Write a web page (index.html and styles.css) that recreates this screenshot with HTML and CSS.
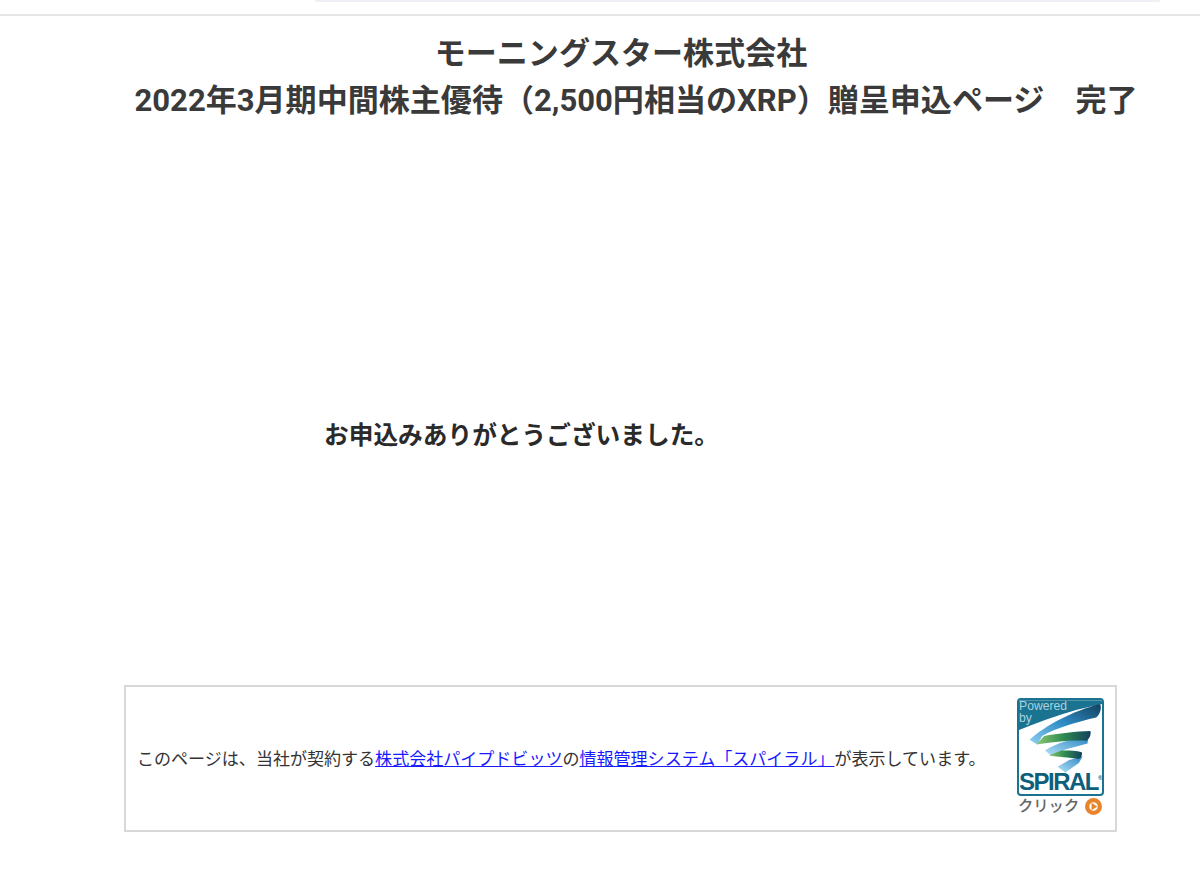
FILE: index.html
```html
<!DOCTYPE html>
<html lang="ja">
<head>
  <meta charset="utf-8">
  <title>モーニングスター株式会社</title>
  <link rel="stylesheet" href="styles.css">
</head>
<body>
  <div class="topbar">
    <div class="topbar-pill"></div>
  </div>
  <div class="container">
    <h1 class="page-title"><span class="title-first">モーニングスター株式会社</span>2022年3月期中間株主優待（2,500円相当のXRP）贈呈申込ページ　完了</h1>
    <p class="message">お申込みありがとうございました。</p>
    <div class="notice">
      <p class="notice-text">このページは、当社が契約する<a href="#">株式会社パイプドビッツ</a>の<a href="#">情報管理システム「スパイラル」</a>が表示しています。</p>
      <a class="spiral" href="#">
        <span class="spiral-logo">
          <svg class="spiral-mark" viewBox="0 0 86 97">
            <defs>
              <linearGradient id="band-top" x1="0" y1="1" x2="1" y2="0">
                <stop offset="0" stop-color="#8fd0f2"/>
                <stop offset="0.5" stop-color="#2f8cc6"/>
                <stop offset="1" stop-color="#12405c"/>
              </linearGradient>
              <linearGradient id="band-green" x1="0" y1="0" x2="1" y2="0">
                <stop offset="0" stop-color="#8cc870"/>
                <stop offset="0.5" stop-color="#2d8a50"/>
                <stop offset="1" stop-color="#12405c"/>
              </linearGradient>
              <linearGradient id="band-blue" x1="0" y1="1" x2="1" y2="0">
                <stop offset="0" stop-color="#b5e2f8"/>
                <stop offset="1" stop-color="#2c86c4"/>
              </linearGradient>
            </defs>
            <path class="spiral-corner" d="M0 0H86V4L60 10C38 16 18 24 0 31Z"/>
            <path d="M84 4C86 8 84 15 80 18C62 22 38 29 24 37L19 46L11 41C28 26 56 11 84 4Z" fill="url(#band-top)"/>
            <path d="M72 38L71 45L48 51L34 58L27 52C40 44 56 40 72 38Z" fill="url(#band-blue)"/>
            <path d="M18 46L26 37C40 35 60 32 74 32C75 36 73 40 70 42C55 41 35 43 18 46Z" fill="url(#band-green)"/>
            <path d="M66 58L62 65L48 75L40 69L52 62Z" fill="url(#band-blue)"/>
            <path d="M31 57L44 52C52 52 60 52 65 54C66 57 64 60 62 61C52 59 40 59 31 57Z" fill="url(#band-green)"/>
          </svg>
          <span class="spiral-powered">Powered<br>by</span>
          <span class="spiral-name">SPIRAL<sup>®</sup></span>
        </span>
        <span class="spiral-click">クリック
          <svg class="click-icon" viewBox="0 0 16 16">
            <circle cx="8" cy="8" r="6" fill="#fff" stroke="#e8842a" stroke-width="4"/>
            <polygon points="6.2,4.5 11.5,8 6.2,11.5" fill="#e8842a"/>
          </svg>
        </span>
      </a>
    </div>
  </div>
</body>
</html>
```

FILE: styles.css
```css
* {
  box-sizing: border-box;
  margin: 0;
  padding: 0;
}

body {
  background: #fff;
  color: #222;
  font-family: Roboto, "Noto Sans CJK JP", sans-serif;
  overflow: hidden;
}

.topbar {
  height: 16px;
  border-bottom: 2px solid #e6e6e8;
  padding-left: 315px;
  padding-right: 40px;
}

.topbar-pill {
  height: 2px;
  background: #eeeef4;
  border-radius: 0 0 8px 8px;
}

.container {
  margin-left: 124px;
  width: 1024px;
}

.page-title {
  margin-top: 14px;
  font-size: 31.05px;
  line-height: 47px;
  font-weight: 700;
  color: #3a3a3a;
  text-align: center;
  white-space: nowrap;
}

.title-first {
  display: block;
  padding-right: 30px;
}

.message {
  margin-top: 294px;
  padding-left: 200px;
  font-size: 24.7px;
  line-height: 36px;
  font-weight: 700;
  color: #2a2a2a;
}

.notice {
  margin-top: 231px;
  width: 993px;
  height: 147px;
  border: 2px solid #d8d8d8;
  display: flex;
  align-items: center;
  justify-content: space-between;
  padding: 0 11px;
}

.notice-text {
  margin-top: -2px;
  font-size: 17.05px;
  color: #333;
  white-space: nowrap;
}

.notice-text a {
  color: #1a1aff;
}

.spiral {
  display: flex;
  flex-direction: column;
  align-items: flex-start;
  text-decoration: none;
  width: 87px;
  margin-bottom: 3px;
}

.spiral-logo {
  position: relative;
  display: block;
  width: 87px;
  height: 98px;
  background: #fff;
  border: 2px solid #1a7390;
  border-radius: 4px;
  overflow: hidden;
}

.spiral-mark {
  display: block;
  width: 83px;
  height: 94px;
}

.spiral-corner {
  fill: #1a7390;
}

.spiral-powered {
  position: absolute;
  left: 0;
  top: 0;
  font-family: "Liberation Sans", sans-serif;
  font-size: 12.2px;
  line-height: 12px;
  color: #a9d2df;
}

.spiral-name {
  position: absolute;
  left: 0;
  bottom: 1px;
  height: 22px;
  font-family: "Liberation Sans", sans-serif;
  font-size: 24px;
  line-height: 22px;
  font-weight: 700;
  color: #0d5f7c;
  letter-spacing: -1.5px;
  white-space: nowrap;
}

.spiral-name sup {
  font-size: 6px;
  line-height: 0;
  letter-spacing: 0;
  vertical-align: 10px;
}

.spiral-click {
  display: flex;
  align-items: center;
  gap: 6px;
  padding-left: 1px;
  font-size: 15.3px;
  line-height: 20px;
  font-weight: 500;
  color: #666;
  white-space: nowrap;
}

.click-icon {
  width: 17px;
  height: 17px;
}
```
